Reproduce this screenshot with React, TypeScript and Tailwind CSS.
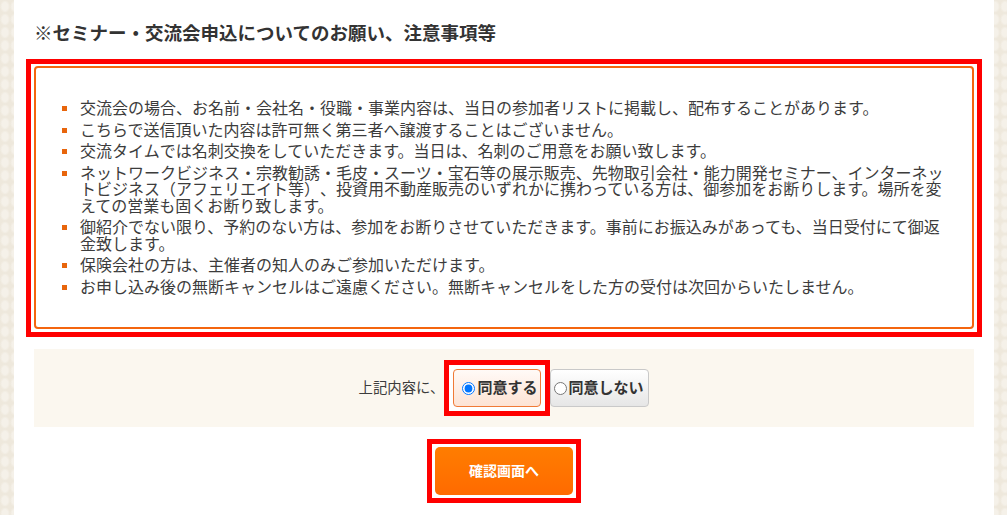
import React, { useState } from 'react';

const notes: string[] = [
  '交流会の場合、お名前・会社名・役職・事業内容は、当日の参加者リストに掲載し、配布することがあります。',
  'こちらで送信頂いた内容は許可無く第三者へ譲渡することはございません。',
  '交流タイムでは名刺交換をしていただきます。当日は、名刺のご用意をお願い致します。',
  'ネットワークビジネス・宗教勧誘・毛皮・スーツ・宝石等の展示販売、先物取引会社・能力開発セミナー、インターネットビジネス（アフェリエイト等）、投資用不動産販売のいずれかに携わっている方は、御参加をお断りします。場所を変えての営業も固くお断り致します。',
  '御紹介でない限り、予約のない方は、参加をお断りさせていただきます。事前にお振込みがあっても、当日受付にて御返金致します。',
  '保険会社の方は、主催者の知人のみご参加いただけます。',
  'お申し込み後の無断キャンセルはご遠慮ください。無断キャンセルをした方の受付は次回からいたしません。',
];

export default function App() {
  const [agree, setAgree] = useState(true);

  return (
    <div className="min-h-[515px] w-full bg-[#eee8dc] bg-[radial-gradient(ellipse_at_center,#f5f1e9_0,#f5f1e9_3px,transparent_5px)] bg-[length:10px_13px] font-['Liberation_Sans','Noto_Sans_CJK_JP',sans-serif] text-[#3c3c3c] [text-spacing-trim:space-all]">
      <div className="ml-[14px] w-[980px] min-h-[515px] bg-white px-[12px] pt-[21px]">
        {/* Title */}
        <h2 className="pl-[8px] text-[18.5px] font-bold leading-[26px] text-[#333]">
          ※セミナー・交流会申込についてのお願い、注意事項等
        </h2>

        {/* Notes */}
        <div className="mt-[12px] border-[5px] border-[#ff0000] bg-white pt-[2px] px-[3px] pb-[3px]">
          <div className="rounded-[4px] border-2 border-[#f4650f] pl-[26px] pt-[33px] pb-[26px]">
            <ul>
              {notes.map((n) => (
                <li key={n} className="mb-[5px] flex text-[16px] leading-[16.5px]">
                  <span className="mt-[5px] h-[5px] w-[5px] shrink-0 bg-[#e8650c]" />
                  <span className="ml-[13px] w-[870px]">{n}</span>
                </li>
              ))}
            </ul>
          </div>
        </div>

        {/* Agreement */}
        <div className="mx-[8px] mt-[12px] flex items-center justify-center bg-[#fbf7ef] py-[11px]">
          <span className="text-[14.4px] leading-[20px] text-[#3c3c3c]">上記内容に、</span>
          <div className="border-[5px] border-[#ff0000] bg-white p-[4px]">
            <label className="flex h-[38px] w-[88px] cursor-pointer items-center rounded-[4px] border border-[#f07a36] bg-gradient-to-b from-[#fffaf7] to-[#fde3d4] pl-[3px]">
              <input
                type="radio"
                name="agree"
                checked={agree}
                onChange={() => setAgree(true)}
                className="ml-[5px] mr-[2px] h-[13px] w-[13px]"
              />
              <span className="text-[15px] font-bold leading-[20px] text-[#333]">同意する</span>
            </label>
          </div>
          <label className="flex h-[38px] w-[99px] cursor-pointer items-center rounded-[4px] border border-[#c9c9c9] bg-gradient-to-b from-white to-[#e6e6e6] pl-[3px]">
            <input
              type="radio"
              name="agree"
              checked={!agree}
              onChange={() => setAgree(false)}
              className="mr-[1px] h-[13px] w-[13px]"
            />
            <span className="text-[15px] font-bold leading-[20px] text-[#333]">同意しない</span>
          </label>
        </div>

        {/* Submit */}
        <div className="mt-[12px] flex justify-center">
          <div className="border-[5px] border-[#ff0000] bg-white p-[3px]">
            <button
              type="button"
              className="flex h-[48px] w-[138px] items-center justify-center rounded-[5px] bg-gradient-to-b from-[#ff7d00] to-[#ff6a00] text-[14px] font-bold text-white"
            >
              確認画面へ
            </button>
          </div>
        </div>
      </div>
    </div>
  );
}
